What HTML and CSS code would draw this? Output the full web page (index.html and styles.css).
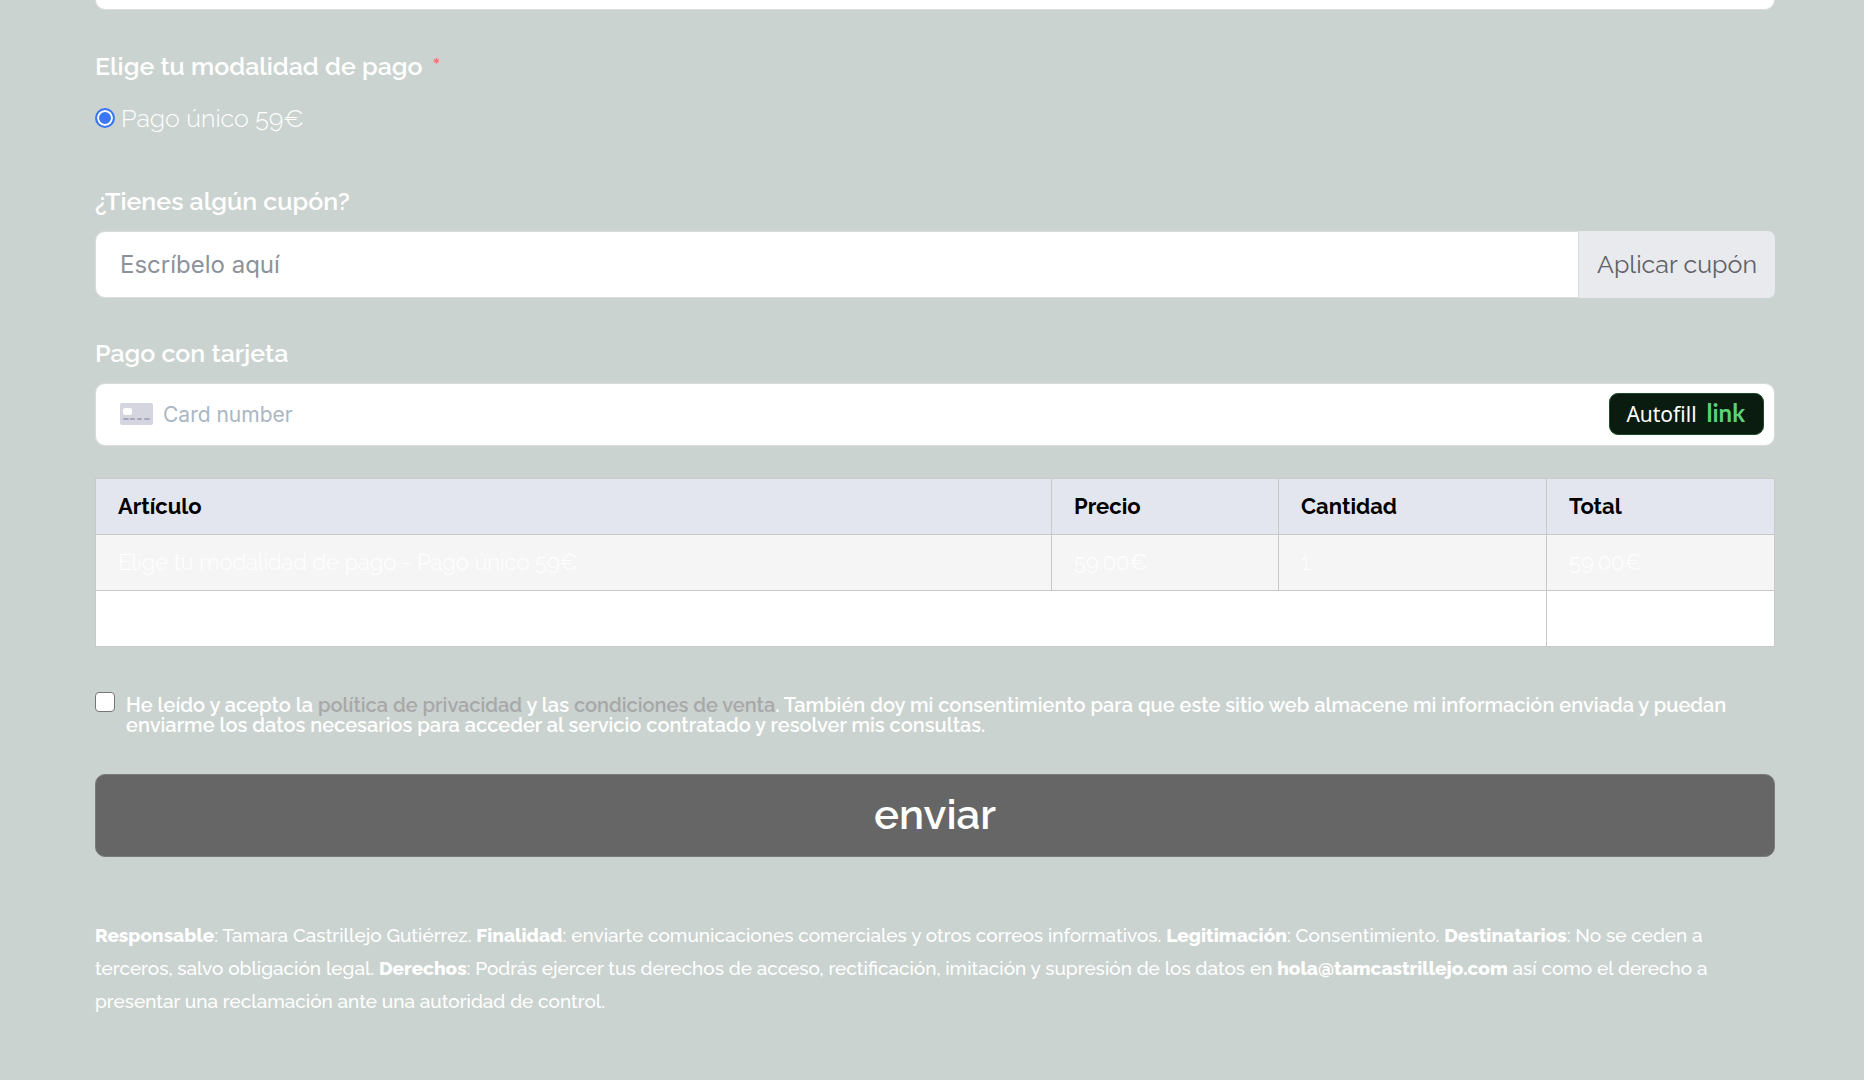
FILE: index.html
```html
<!DOCTYPE html>
<html lang="es">
<head>
<meta charset="utf-8">
<meta name="viewport" content="width=device-width, initial-scale=1">
<title>Formulario de pago</title>
<link rel="stylesheet" href="styles.css">
</head>
<body>
<form class="checkout">
  <input class="control control-cut" type="text" aria-label="Campo anterior">

  <fieldset class="group group-plan">
    <legend class="label">Elige tu modalidad de pago <span class="required">*</span></legend>
    <label class="option"><input class="radio" type="radio" name="plan" checked>Pago único 59€</label>
  </fieldset>

  <div class="group">
    <label class="label" for="coupon">¿Tienes algún cupón?</label>
    <div class="coupon">
      <input class="control coupon-input" id="coupon" type="text" placeholder="Escríbelo aquí">
      <button class="coupon-button" type="button">Aplicar cupón</button>
    </div>
  </div>

  <div class="group group-card">
    <label class="label" for="card">Pago con tarjeta</label>
    <div class="card-field">
      <svg class="card-icon" viewBox="0 0 33 22" aria-hidden="true">
        <rect width="33" height="22" rx="2" fill="#d5d5df"/>
        <rect x="3" y="5" width="9" height="7" rx="2" fill="#fff"/>
        <path d="M4 16h4M11 16h3M18 16h3M25 16h4" stroke="#a9a6bb" stroke-width="2" stroke-linecap="round"/>
      </svg>
      <input class="card-input" id="card" type="text" placeholder="Card number">
      <button class="autofill" type="button">Autofill <span class="link-logo">link</span></button>
    </div>
  </div>

  <table class="summary">
    <colgroup><col class="col-item"><col class="col-price"><col class="col-qty"><col class="col-total"></colgroup>
    <thead><tr><th>Artículo</th><th>Precio</th><th>Cantidad</th><th>Total</th></tr></thead>
    <tbody><tr><td>Elige tu modalidad de pago - Pago único 59€</td><td>59.00€</td><td>1</td><td>59.00€</td></tr></tbody>
    <tfoot><tr><td colspan="3"></td><td></td></tr></tfoot>
  </table>

  <div class="consent">
    <input class="checkbox" id="consent" type="checkbox">
    <label for="consent">He leído y acepto la <a href="#privacidad">política de privacidad</a> y las <a href="#condiciones">condiciones de venta</a>. También doy mi consentimiento para que este sitio web almacene mi información enviada y puedan enviarme los datos necesarios para acceder al servicio contratado y resolver mis consultas.</label>
  </div>

  <button class="submit" type="submit">enviar</button>

  <p class="legal"><strong>Responsable</strong>: Tamara Castrillejo Gutiérrez. <strong>Finalidad</strong>: enviarte comunicaciones comerciales y otros correos informativos. <strong>Legitimación</strong>: Consentimiento. <strong>Destinatarios</strong>: No se ceden a terceros, salvo obligación legal. <strong>Derechos</strong>: Podrás ejercer tus derechos de acceso, rectificación, imitación y supresión de los datos en <strong>hola@tamcastrillejo.com</strong> así como el derecho a presentar una reclamación ante una autoridad de control.</p>
</form>
</body>
</html>
```
FILE: styles.css
```css
* { box-sizing: border-box; }

body {
  margin: 0;
  background: #cbd3d0;
  color: #fff;
  font-family: Raleway, "Open Sans", sans-serif;
  font-size: 25px;
  font-weight: 300;
}

.checkout {
  display: flex;
  flex-direction: column;
  padding: 0 89px 56px 95px;
}

.control {
  width: 100%;
  border: 1px solid #dadbdd;
  border-radius: 10px;
  background: #fff;
  padding: 0 24px;
  font: 400 24px Inter, sans-serif;
}

.control-cut {
  height: 10px;
  border-top: 0;
  border-radius: 0 0 10px 10px;
}

.group {
  margin: 0 0 39px;
  padding: 0;
  border: 0;
}

.label {
  display: block;
  margin-bottom: 14px;
  padding: 0;
  font-weight: 600;
  line-height: 32px;
}

.group-plan { margin: 40px 0 51px; }

.required {
  margin-left: 4px;
  color: #f56c6c;
  font: 600 14px Inter, sans-serif;
  vertical-align: 6px;
}

.option {
  display: flex;
  align-items: center;
  gap: 6px;
  line-height: 32px;
  padding-top: 6px;
}

.radio,
.checkbox {
  appearance: none;
  flex: none;
  width: 20px;
  height: 20px;
  margin: 0;
  background: #fff;
}

.radio {
  border: 2px solid #3b76f6;
  border-radius: 50%;
}

.radio:checked {
  background: #3b76f6;
  box-shadow: inset 0 0 0 2px #fff;
}

.checkbox {
  border: 1px solid #767676;
  border-radius: 4px;
}

.coupon { display: flex; }

.coupon-input {
  flex: 1;
  min-width: 0;
  border-radius: 10px 0 0 10px;
}

.coupon-input::placeholder { color: #8b929b; opacity: 1; }

.coupon-button {
  height: 67px;
  padding: 0 18px 2px;
  border: 0;
  border-radius: 0 7px 7px 0;
  background: #e9eaee;
  color: #606266;
  font: 400 25px Raleway, sans-serif;
}

.card-field {
  display: flex;
  align-items: center;
  gap: 10px;
  height: 63px;
  padding: 0 10px 2px 24px;
  border: 1px solid #dadbdd;
  border-radius: 10px;
  background: #fff;
}

.card-icon {
  flex: none;
  width: 33px;
  height: 22px;
}

.card-input {
  flex: 1;
  min-width: 0;
  padding: 2px 0 0;
  border: 0;
  font: 400 21px Inter, sans-serif;
}

.card-input::placeholder { color: #aab7c4; opacity: 1; }

.autofill {
  display: flex;
  align-items: center;
  gap: 10px;
  height: 42px;
  padding: 0 18px 0 16px;
  border: 1px solid #1d4a2c;
  border-radius: 9px;
  background: #0a1c10;
  color: #fff;
  font: 400 21px "Noto Sans", sans-serif;
}

.link-logo {
  padding-bottom: 2px;
  color: #5bd17a;
  font: 700 24px Lato, sans-serif;
}

.group-card { margin-bottom: 32px; }

.summary {
  width: 100%;
  border-collapse: collapse;
  table-layout: fixed;
  background: #fff;
  font-size: 22px;
}

.col-price { width: 227px; }
.col-qty { width: 268px; }
.col-total { width: 228px; }

.summary th,
.summary td {
  height: 56px;
  padding: 0 22px 2px;
  border: 1px solid #c8c9c9;
  text-align: left;
}

.summary th {
  background: #e3e6ee;
  color: #000;
  font-weight: 700;
}

.summary tbody td { background: #f5f5f5; }

.consent {
  display: flex;
  gap: 11px;
  margin-top: 45px;
  font-size: 20px;
  font-weight: 600;
  line-height: 20px;
}

.consent label { padding-top: 3px; }

.consent a {
  color: #a8a8a8;
  text-decoration: none;
}

.submit {
  height: 83px;
  margin-top: 39px;
  padding: 0 0 2px;
  border: 1px solid #7a7c7b;
  border-radius: 10px;
  background: #666;
  color: #fff;
  font: 600 42px Raleway, sans-serif;
}

.legal {
  margin: 62px 0 0;
  font-size: 19px;
  font-weight: 500;
  line-height: 33px;
}

.legal strong { font-weight: 800; }
```
